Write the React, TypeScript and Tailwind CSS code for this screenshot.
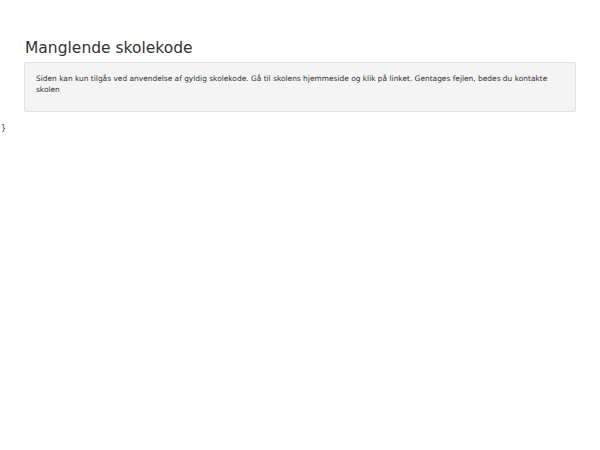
export default function App() {
  return (
    <div className="min-h-[450px] bg-white text-[#333] font-['DejaVu_Sans',sans-serif]">
      <div className="px-[24px] pt-[38px] w-[600px]">
        <h1 className="text-[15.5px] leading-[21px] mb-[3px] pl-[1px]">Manglende skolekode</h1>
        <div className="w-[552px] bg-[#f4f4f4] border border-[#e3e3e3] rounded-[2px] px-[11px] pt-[10px] pb-[16px] text-[7.45px] leading-[11px]">
          Siden kan kun tilgås ved anvendelse af gyldig skolekode. Gå til skolens hjemmeside og klik på linket. Gentages fejlen, bedes du kontakte skolen
        </div>
      </div>
      <div className="pl-[1px] pt-[11px] text-[8px] leading-[11px]">{'}'}</div>
    </div>
  );
}
